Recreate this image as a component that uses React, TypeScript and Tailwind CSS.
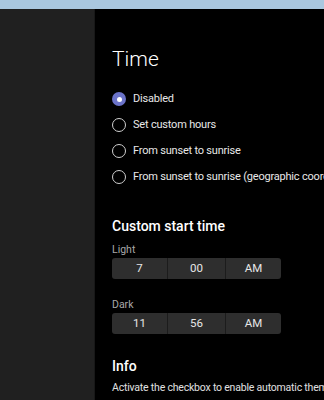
const font = { fontFamily: 'Roboto, "Open Sans", sans-serif' };

const options = [
  "Disabled",
  "Set custom hours",
  "From sunset to sunrise",
  "From sunset to sunrise (geographic coordinates)",
];

function Radio({ checked, label }: { checked: boolean; label: string }) {
  return (
    <div className="flex h-[26px] items-center gap-[7px]">
      {checked ? (
        <span className="flex h-[14px] w-[14px] shrink-0 items-center justify-center rounded-full bg-[#6b73c9]">
          <span className="h-[5px] w-[5px] rounded-full bg-white" />
        </span>
      ) : (
        <span className="h-[14px] w-[14px] shrink-0 rounded-full border border-[#d0d0d0]" />
      )}
      <span className="whitespace-nowrap text-[11px] tracking-[-0.2px] text-[#e8e8e8]">{label}</span>
    </div>
  );
}

function TimePicker({ label, h, m, ap }: { label: string; h: string; m: string; ap: string }) {
  return (
    <div className="flex flex-col">
      <span className="text-[10.5px] leading-[14px] text-[#a8a8a8]">{label}</span>
      <div className="mt-[1px] flex h-[21px] w-[169px] overflow-hidden rounded-[3px] bg-[#2e2e2e] text-[11.5px] text-[#e6e6e6]">
        <div className="flex w-[56px] items-center justify-center border-r border-[#1c1c1c]">{h}</div>
        <div className="flex w-[58px] items-center justify-center border-r border-[#1c1c1c]">{m}</div>
        <div className="flex flex-1 items-center justify-center">{ap}</div>
      </div>
    </div>
  );
}

export default function App() {
  return (
    <div className="flex h-[400px] w-[324px] flex-col overflow-hidden bg-black" style={font}>
      <div className="h-[9px] shrink-0 bg-[#a9c7df]" />
      <div className="flex min-h-0 flex-1">
        <div className="w-[95px] shrink-0 border-r border-[#181818] bg-[#202020]" />
        <div className="flex min-w-0 flex-1 flex-col pl-[17px] pt-[36px]">
          <h1 className="text-[21px] font-light leading-[28px] text-white">Time</h1>
          <div className="mt-[13px] flex flex-col">
            {options.map((o, i) => (
              <Radio key={o} checked={i === 0} label={o} />
            ))}
          </div>
          <h2 className="mt-[27px] text-[14px] font-medium leading-[18px] text-white">Custom start time</h2>
          <div className="mt-[8px]">
            <TimePicker label="Light" h="7" m="00" ap="AM" />
          </div>
          <div className="mt-[19px]">
            <TimePicker label="Dark" h="11" m="56" ap="AM" />
          </div>
          <h2 className="mt-[23px] text-[14px] font-medium leading-[18px] text-white">Info</h2>
          <p className="mt-[5px] whitespace-nowrap text-[10.5px] leading-[15px] tracking-[-0.2px] text-[#e0e0e0]">
            Activate the checkbox to enable automatic theme switching
          </p>
        </div>
      </div>
    </div>
  );
}
